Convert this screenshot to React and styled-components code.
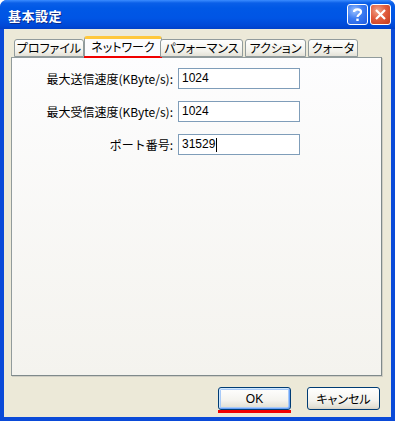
import React from "react";
import styled, { createGlobalStyle } from "styled-components";

const Global = createGlobalStyle`
  html, body { margin: 0; padding: 0; background: #fff; }
  body { font-family: "Noto Sans CJK JP", "Liberation Sans", sans-serif; }
`;

const Window = styled.div`
  width: 395px;
  height: 421px;
  display: flex;
  flex-direction: column;
  box-sizing: border-box;
  background: #0a4ad8;
  border-radius: 7px 7px 0 0;
  overflow: hidden;
`;

const TitleBar = styled.div`
  height: 29px;
  flex: none;
  display: flex;
  align-items: center;
  padding: 0 4px 0 8px;
  background: linear-gradient(
    to bottom,
    #3b8cff 0px,
    #0a5fe8 3px,
    #0058e6 8px,
    #0055e5 18px,
    #0048d6 26px,
    #0040c8 29px
  );
`;

const Title = styled.div`
  flex: 1;
  color: #fff;
  font-weight: bold;
  font-size: 13px;
  letter-spacing: 0.5px;
  text-shadow: 1px 1px 0 #0b2a8a;
  font-family: "Noto Sans CJK JP", sans-serif;
  padding-top: 1px;
`;

const CapButton = styled.div`
  width: 21px;
  height: 21px;
  box-sizing: border-box;
  margin-left: 2px;
  border: 1px solid #fff;
  border-radius: 3px;
  display: flex;
  align-items: center;
  justify-content: center;
  background: ${(p) =>
    p.$close
      ? "radial-gradient(circle at 35% 30%, #f0a58c 0%, #e25d3e 45%, #c23a1c 100%)"
      : "radial-gradient(circle at 35% 30%, #9cc2ff 0%, #3c7cf2 45%, #1f5ae0 100%)"};
`;

const Body = styled.div`
  flex: 1;
  margin: 0 4px 4px 4px;
  background: #ece9d8;
  display: flex;
  flex-direction: column;
  padding: 7px 9px 0 7px;
  min-height: 0;
`;

const TabStrip = styled.div`
  display: flex;
  align-items: flex-end;
  height: 21px;
  padding-left: 3px;
  position: relative;
  z-index: 1;
`;

const Tab = styled.div`
  box-sizing: border-box;
  width: ${(p) => p.$w}px;
  margin-right: ${(p) => (p.$selected ? -2 : 2)}px;
  margin-left: ${(p) => (p.$selected ? -2 : 0)}px;
  height: ${(p) => (p.$selected ? 22 : 18)}px;
  margin-bottom: ${(p) => (p.$selected ? -1 : 0)}px;
  border: 1px solid #919b9c;
  border-bottom: ${(p) => (p.$selected ? "none" : "1px solid #919b9c")};
  border-top: ${(p) => (p.$selected ? "3px solid #ffc83c" : "1px solid #919b9c")};
  border-radius: 3px 3px 0 0;
  background: ${(p) =>
    p.$selected ? "#fcfcfe" : "linear-gradient(#ffffff, #f2f1ea 70%, #e4e2d8)"};
  font-size: 12px;
  font-feature-settings: "palt";
  color: #000;
  text-align: center;
  line-height: 16px;
  white-space: nowrap;
  position: relative;
  &::after {
    content: "";
    display: ${(p) => (p.$underline ? "block" : "none")};
    position: absolute;
    left: -1px;
    right: -1px;
    bottom: 0px;
    height: 2px;
    background: #f00000;
  }
`;

const Panel = styled.div`
  height: 319px;
  box-sizing: border-box;
  border: 1px solid #919b9c;
  border-right-color: #7f8a8b;
  border-bottom-color: #7f8a8b;
  box-shadow: 1px 1px 0 #d0cec4;
  background: linear-gradient(#fdfdfe, #f4f3ee);
  padding: 10px 0 0 0;
`;

const Form = styled.div`
  display: grid;
  grid-template-columns: 161px 122px;
  column-gap: 5px;
  row-gap: 12px;
  align-items: center;
`;

const Label = styled.div`
  text-align: right;
  font-size: 12px;
  color: #000;
  white-space: nowrap;
`;

const Input = styled.div`
  height: 21px;
  box-sizing: border-box;
  border: 1px solid #7f9db9;
  background: #fff;
  font-family: "Liberation Sans", sans-serif;
  font-size: 12px;
  line-height: 19px;
  padding-left: 3px;
  color: #000;
  display: flex;
  align-items: center;
`;

const Caret = styled.span`
  display: inline-block;
  width: 1px;
  height: 14px;
  background: #000;
  margin-left: 1px;
`;

const ButtonRow = styled.div`
  display: flex;
  justify-content: flex-end;
  gap: 16px;
  padding: 11px 2px 0 0;
`;

const Button = styled.div`
  width: 73px;
  height: 23px;
  box-sizing: border-box;
  border: 1px solid #003c74;
  border-radius: 3px;
  background: linear-gradient(#ffffff, #f4f3ee 60%, #e3e1d6 90%, #d6d0c5);
  box-shadow: ${(p) =>
    p.$default
      ? "inset 1px 1px 0 #cee7ff, inset -1px -1px 0 #69a2f8, inset 0 0 0 2px #a8caf8"
      : "none"};
  font-size: 12px;
  font-feature-settings: "palt";
  display: flex;
  align-items: center;
  justify-content: center;
  color: #000;
  position: relative;
  font-family: ${(p) => (p.$latin ? '"Liberation Sans", sans-serif' : '"Noto Sans CJK JP", sans-serif')};
  &::after {
    content: "";
    display: ${(p) => (p.$underline ? "block" : "none")};
    position: absolute;
    left: -1px;
    right: -1px;
    bottom: -4px;
    height: 3px;
    background: #f00000;
  }
`;

export default function App() {
  return (
    <>
      <Global />
      <Window>
        <TitleBar>
          <Title>基本設定</Title>
          <CapButton>
            <svg width="13" height="15" viewBox="0 0 13 15">
              <path
                d="M3 5 C3 1.5 10 1.5 10 5 C10 7.3 6.5 7.5 6.5 10"
                stroke="#fff"
                strokeWidth="2.2"
                fill="none"
              />
              <rect x="5.3" y="11.6" width="2.4" height="2.4" fill="#fff" />
            </svg>
          </CapButton>
          <CapButton $close>
            <svg width="13" height="13" viewBox="0 0 13 13">
              <path d="M2 2 L11 11 M11 2 L2 11" stroke="#fff" strokeWidth="2.2" />
            </svg>
          </CapButton>
        </TitleBar>
        <Body>
          <TabStrip>
            <Tab $w={70}>プロファイル</Tab>
            <Tab $w={78} $selected $underline>ネットワーク</Tab>
            <Tab $w={83}>パフォーマンス</Tab>
            <Tab $w={61}>アクション</Tab>
            <Tab $w={50}>クォータ</Tab>
          </TabStrip>
          <Panel>
            <Form>
              <Label>最大送信速度(KByte/s):</Label>
              <Input>1024</Input>
              <Label>最大受信速度(KByte/s):</Label>
              <Input>1024</Input>
              <Label>ポート番号:</Label>
              <Input>
                31529
                <Caret />
              </Input>
            </Form>
          </Panel>
          <ButtonRow>
            <Button $default $underline $latin>OK</Button>
            <Button>キャンセル</Button>
          </ButtonRow>
        </Body>
      </Window>
    </>
  );
}
